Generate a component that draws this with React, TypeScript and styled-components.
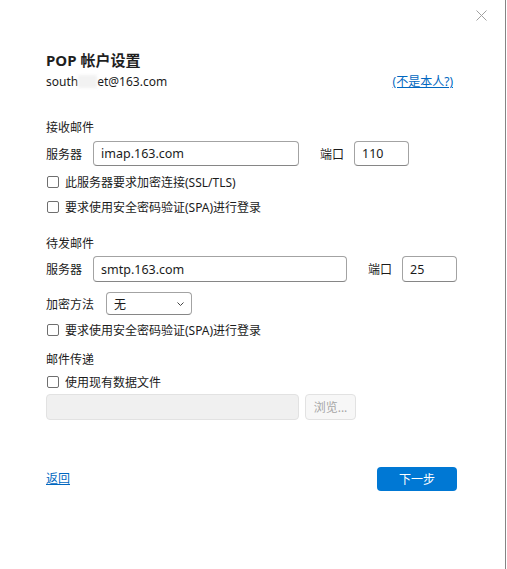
import * as React from 'react';
import styled, { createGlobalStyle } from 'styled-components';

const GlobalStyle = createGlobalStyle`
  html, body {
    margin: 0;
    padding: 0;
    background: #ffffff;
  }
  body {
    font-family: 'Noto Sans', 'Noto Sans CJK SC', sans-serif;
    color: #1b1b1b;
  }
`;

const Dialog = styled.div`
  position: relative;
  box-sizing: border-box;
  width: 506px;
  height: 569px;
  padding: 49px 48px 0 46px;
  background: #ffffff;
  border-right: 1px solid #858585;
  display: flex;
  flex-direction: column;
`;

const CloseButton = styled.button`
  position: absolute;
  top: 9px;
  right: 17px;
  width: 13px;
  height: 13px;
  padding: 0;
  border: none;
  background: transparent;
  display: flex;
  align-items: center;
  justify-content: center;
`;

const Title = styled.h1`
  margin: 0;
  font-size: 15px;
  line-height: 22px;
  font-weight: 700;
  color: #1f1f1f;
`;

const AccountRow = styled.div`
  margin-top: 2px;
  display: flex;
  justify-content: space-between;
  align-items: center;
  font-size: 12px;
  line-height: 18px;
  padding-right: 4px;
`;

const Redacted = styled.span`
  display: inline-block;
  width: 19px;
  height: 13px;
  vertical-align: -2px;
  background: #f2f2f2;
  filter: blur(1.5px);
`;

const Link = styled.a`
  color: #0067c0;
  text-decoration: underline;
  font-size: 12px;
  cursor: pointer;
`;

const SectionLabel = styled.div<{ gap: number }>`
  margin-top: ${({ gap }) => gap}px;
  font-size: 12px;
  line-height: 18px;
`;

const FieldRow = styled.div<{ gap: number }>`
  margin-top: ${({ gap }) => gap}px;
  display: flex;
  align-items: center;
  font-size: 12px;
`;

const FieldLabel = styled.span<{ space: number }>`
  margin-right: ${({ space }) => space}px;
  white-space: nowrap;
  flex-shrink: 0;
`;

const TextInput = styled.input<{ w: number; h?: number }>`
  box-sizing: border-box;
  flex-shrink: 0;
  width: ${({ w }) => w}px;
  height: ${({ h }) => h || 26}px;
  padding: 0 7px;
  border: 1px solid #a3a3a3;
  border-bottom-color: #868686;
  border-radius: 4px;
  font-family: inherit;
  font-size: 12.5px;
  color: #1b1b1b;
  background: #ffffff;
  outline: none;
`;

const PortLabel = styled.span`
  margin-left: 21px;
  margin-right: 10px;
  white-space: nowrap;
  flex-shrink: 0;
`;

const SelectBox = styled.div`
  box-sizing: border-box;
  width: 86px;
  height: 23px;
  padding: 0 7px;
  border: 1px solid #a3a3a3;
  border-bottom-color: #868686;
  border-radius: 4px;
  display: flex;
  align-items: center;
  justify-content: space-between;
  font-size: 12px;
`;

const CheckRow = styled.label<{ gap?: number }>`
  margin-top: ${({ gap }) => gap || 0}px;
  height: 25px;
  display: flex;
  align-items: center;
  gap: 6px;
  font-size: 12px;
  padding-left: 1px;
`;

const Check = styled.input`
  appearance: none;
  box-sizing: border-box;
  margin: 0;
  width: 12px;
  height: 12px;
  border: 1px solid #6f6f6f;
  border-radius: 2px;
  background: #ffffff;
`;

const FileRow = styled.div`
  display: flex;
  align-items: center;
  gap: 6px;
`;

const FileInput = styled.div`
  box-sizing: border-box;
  width: 253px;
  height: 26px;
  border: 1px solid #e2e2e2;
  border-radius: 4px;
  background: #f0f0f0;
`;

const BrowseButton = styled.button`
  box-sizing: border-box;
  width: 51px;
  height: 26px;
  padding: 0;
  border: 1px solid #e2e2e2;
  border-radius: 4px;
  background: #f7f7f7;
  color: #a6a6a6;
  font-family: inherit;
  font-size: 12px;
`;

const Footer = styled.div`
  margin-top: 47px;
  display: flex;
  justify-content: space-between;
  align-items: center;
`;

const BackLink = styled(Link)`
  font-size: 12px;
  margin-top: -2px;
`;

const PrimaryButton = styled.button`
  box-sizing: border-box;
  width: 80px;
  height: 24px;
  border: none;
  border-radius: 4px;
  background: #0078d4;
  color: #ffffff;
  font-family: inherit;
  font-size: 12px;
`;

function CloseIcon() {
  return (
    <svg width='11' height='11' viewBox='0 0 11 11'>
      <path d='M0.5 0.5 L10.5 10.5 M10.5 0.5 L0.5 10.5' stroke='#a0a0a0' strokeWidth='1' />
    </svg>
  );
}

function Chevron() {
  return (
    <svg width='7' height='4' viewBox='0 0 7 4'>
      <path d='M0.5 0.5 L3.5 3.5 L6.5 0.5' fill='none' stroke='#444' strokeWidth='1' />
    </svg>
  );
}

export default function App() {
  return (
    <>
      <GlobalStyle />
      <Dialog>
        <CloseButton aria-label='关闭'>
          <CloseIcon />
        </CloseButton>

        <Title>POP 帐户设置</Title>
        <AccountRow>
          <span>
            south
            <Redacted />
            et@163.com
          </span>
          <Link>(不是本人?)</Link>
        </AccountRow>

        <SectionLabel gap={28}>接收邮件</SectionLabel>
        <FieldRow gap={4}>
          <FieldLabel space={11}>服务器</FieldLabel>
          <TextInput w={206} h={25} defaultValue='imap.163.com' />
          <PortLabel>端口</PortLabel>
          <TextInput w={55} h={25} defaultValue='110' />
        </FieldRow>
        <CheckRow gap={3}>
          <Check type='checkbox' />
          此服务器要求加密连接(SSL/TLS)
        </CheckRow>
        <CheckRow>
          <Check type='checkbox' />
          要求使用安全密码验证(SPA)进行登录
        </CheckRow>

        <SectionLabel gap={16}>待发邮件</SectionLabel>
        <FieldRow gap={3}>
          <FieldLabel space={11}>服务器</FieldLabel>
          <TextInput w={254} defaultValue='smtp.163.com' />
          <PortLabel>端口</PortLabel>
          <TextInput w={55} defaultValue='25' />
        </FieldRow>
        <FieldRow gap={10}>
          <FieldLabel space={12}>加密方法</FieldLabel>
          <SelectBox>
            <span>无</span>
            <Chevron />
          </SelectBox>
        </FieldRow>
        <CheckRow gap={2}>
          <Check type='checkbox' />
          要求使用安全密码验证(SPA)进行登录
        </CheckRow>

        <SectionLabel gap={9}>邮件传递</SectionLabel>
        <CheckRow>
          <Check type='checkbox' />
          使用现有数据文件
        </CheckRow>
        <FileRow>
          <FileInput />
          <BrowseButton disabled>浏览...</BrowseButton>
        </FileRow>

        <Footer>
          <BackLink>返回</BackLink>
          <PrimaryButton>下一步</PrimaryButton>
        </Footer>
      </Dialog>
    </>
  );
}
